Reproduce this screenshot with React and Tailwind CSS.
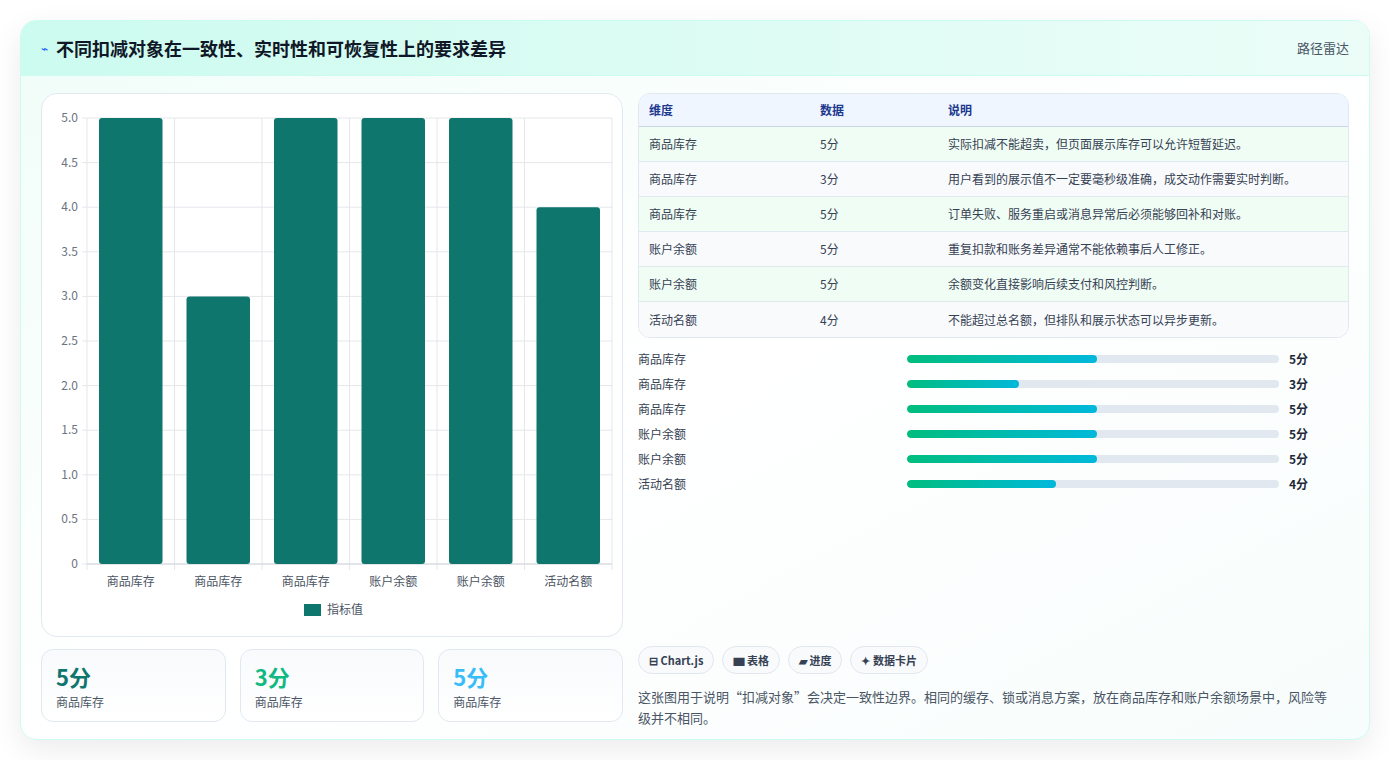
const rows = [
  { name: '商品库存', v: 5, desc: '实际扣减不能超卖，但页面展示库存可以允许短暂延迟。' },
  { name: '商品库存', v: 3, desc: '用户看到的展示值不一定要毫秒级准确，成交动作需要实时判断。' },
  { name: '商品库存', v: 5, desc: '订单失败、服务重启或消息异常后必须能够回补和对账。' },
  { name: '账户余额', v: 5, desc: '重复扣款和账务差异通常不能依赖事后人工修正。' },
  { name: '账户余额', v: 5, desc: '余额变化直接影响后续支付和风控判断。' },
  { name: '活动名额', v: 4, desc: '不能超过总名额，但排队和展示状态可以异步更新。' },
];

function BarChart() {
  const W = 582, top = 22, bottom = 468, left = 45, right = 570;
  const ticks = [5, 4.5, 4, 3.5, 3, 2.5, 2, 1.5, 1, 0.5, 0];
  const y = v => bottom - (v / 5) * (bottom - top);
  const cw = (right - left) / 6;
  return (
    <svg width={W} height={530} className="block">
      {ticks.map(t => (
        <g key={t}>
          <line x1={left - 5} x2={right} y1={y(t)} y2={y(t)} stroke="#e5e7eb" />
          <text x={left - 9} y={y(t) + 4} textAnchor="end" fontSize="12" fill="#6b7280">{t === 0 ? '0' : t.toFixed(1)}</text>
        </g>
      ))}
      {[0, 1, 2, 3, 4, 5, 6].map(i => (
        <line key={i} x1={left + i * cw} x2={left + i * cw} y1={top} y2={bottom + 6} stroke="#e5e7eb" />
      ))}
      <line x1={left} x2={right} y1={bottom} y2={bottom} stroke="#d1d5db" />
      {rows.map((r, i) => (
        <g key={i}>
          <rect x={left + i * cw + 12} y={y(r.v)} width={cw - 24} height={bottom - y(r.v)} rx="3" fill="#0f766e" />
          <text x={left + i * cw + cw / 2} y={bottom + 22} textAnchor="middle" fontSize="12" fill="#4b5563">{r.name}</text>
        </g>
      ))}
      <rect x={262} y={508} width={17} height={12} fill="#0f766e" />
      <text x={285} y={518} fontSize="12" fill="#4b5563">指标值</text>
    </svg>
  );
}

export default function App() {
  return (
    <div className="min-h-screen bg-white p-5" style={{ fontFamily: '"Noto Sans CJK SC", "Noto Sans", sans-serif' }}>
      <div className="h-[720px] rounded-2xl border border-teal-100 shadow-[0_10px_30px_rgba(0,0,0,0.08)] bg-gradient-to-br from-[#f0fdf9] via-white to-[#f7fdfc] overflow-hidden">
        <div className="h-[55px] flex items-center justify-between px-5 bg-gradient-to-r from-[#ccfbef] to-[#ecfdf8] border-b border-teal-100">
          <div className="flex items-center gap-2">
            <span className="text-blue-600 text-xs">⌁</span>
            <h1 className="text-[18px] font-bold text-gray-900">不同扣减对象在一致性、实时性和可恢复性上的要求差异</h1>
          </div>
          <span className="text-[13px] text-gray-600">路径雷达</span>
        </div>
        <div className="flex gap-[15px] px-5 pt-[17px]">
          <div className="w-[582px] flex flex-col gap-3">
            <div className="h-[544px] rounded-2xl border border-slate-200 bg-white pt-0.5"><BarChart /></div>
            <div className="grid grid-cols-3 gap-[14px]">
              {[['5分', 'text-[#0f766e]'], ['3分', 'text-[#10b981]'], ['5分', 'text-[#38bdf8]']].map(([v, c], i) => (
                <div key={i} className="h-[73px] rounded-xl border border-slate-200 bg-gradient-to-b from-slate-50 to-white px-3.5 pt-2.5">
                  <div className={`text-[22px] font-bold leading-8 ${c}`}>{v}</div>
                  <div className="text-xs text-gray-600 mt-0.5">商品库存</div>
                </div>
              ))}
            </div>
          </div>
          <div className="w-[713px] flex flex-col">
            <div className="rounded-xl border border-slate-200 overflow-hidden bg-white">
              <div className="flex h-[33px] items-center bg-[#eff6ff] border-b border-slate-300 text-xs font-bold text-blue-900 px-2.5">
                <div className="w-[171px]">维度</div><div className="w-[128px]">数据</div><div>说明</div>
              </div>
              {rows.map((r, i) => (
                <div key={i} className={`flex h-[35px] items-center px-2.5 text-xs text-gray-700 ${i % 2 ? 'bg-slate-50' : 'bg-[#f0fdf4]'} ${i < 5 ? 'border-b border-slate-200' : ''}`}>
                  <div className="w-[171px]">{r.name}</div><div className="w-[128px]">{r.v}分</div><div>{r.desc}</div>
                </div>
              ))}
            </div>
            <div className="mt-2 flex flex-col">
              {rows.map((r, i) => (
                <div key={i} className="flex items-center h-[25px] text-xs text-gray-700">
                  <div className="w-[269px]">{r.name}</div>
                  <div className="w-[372px] h-2 rounded-full bg-slate-200 overflow-hidden">
                    <div className="h-full rounded-full bg-gradient-to-r from-emerald-500 to-cyan-500" style={{ width: `${r.v * 10 + (r.v === 5 ? 1 : 0)}%` }} />
                  </div>
                  <div className="ml-2.5 font-bold text-gray-800">{r.v}分</div>
                </div>
              ))}
            </div>
            <div className="mt-[150px] flex gap-2">
              {['⊟ Chart.js', '▆ 表格', '▰ 进度', '✦ 数据卡片'].map(t => (
                <span key={t} className="h-7 px-2.5 flex items-center rounded-full border border-slate-200 bg-slate-50 text-[11px] font-bold text-gray-700">{t}</span>
              ))}
            </div>
            <p className="mt-3 text-[13px] leading-[21px] text-gray-600 pr-4">这张图用于说明“扣减对象”会决定一致性边界。相同的缓存、锁或消息方案，放在商品库存和账户余额场景中，风险等级并不相同。</p>
          </div>
        </div>
      </div>
    </div>
  );
}
